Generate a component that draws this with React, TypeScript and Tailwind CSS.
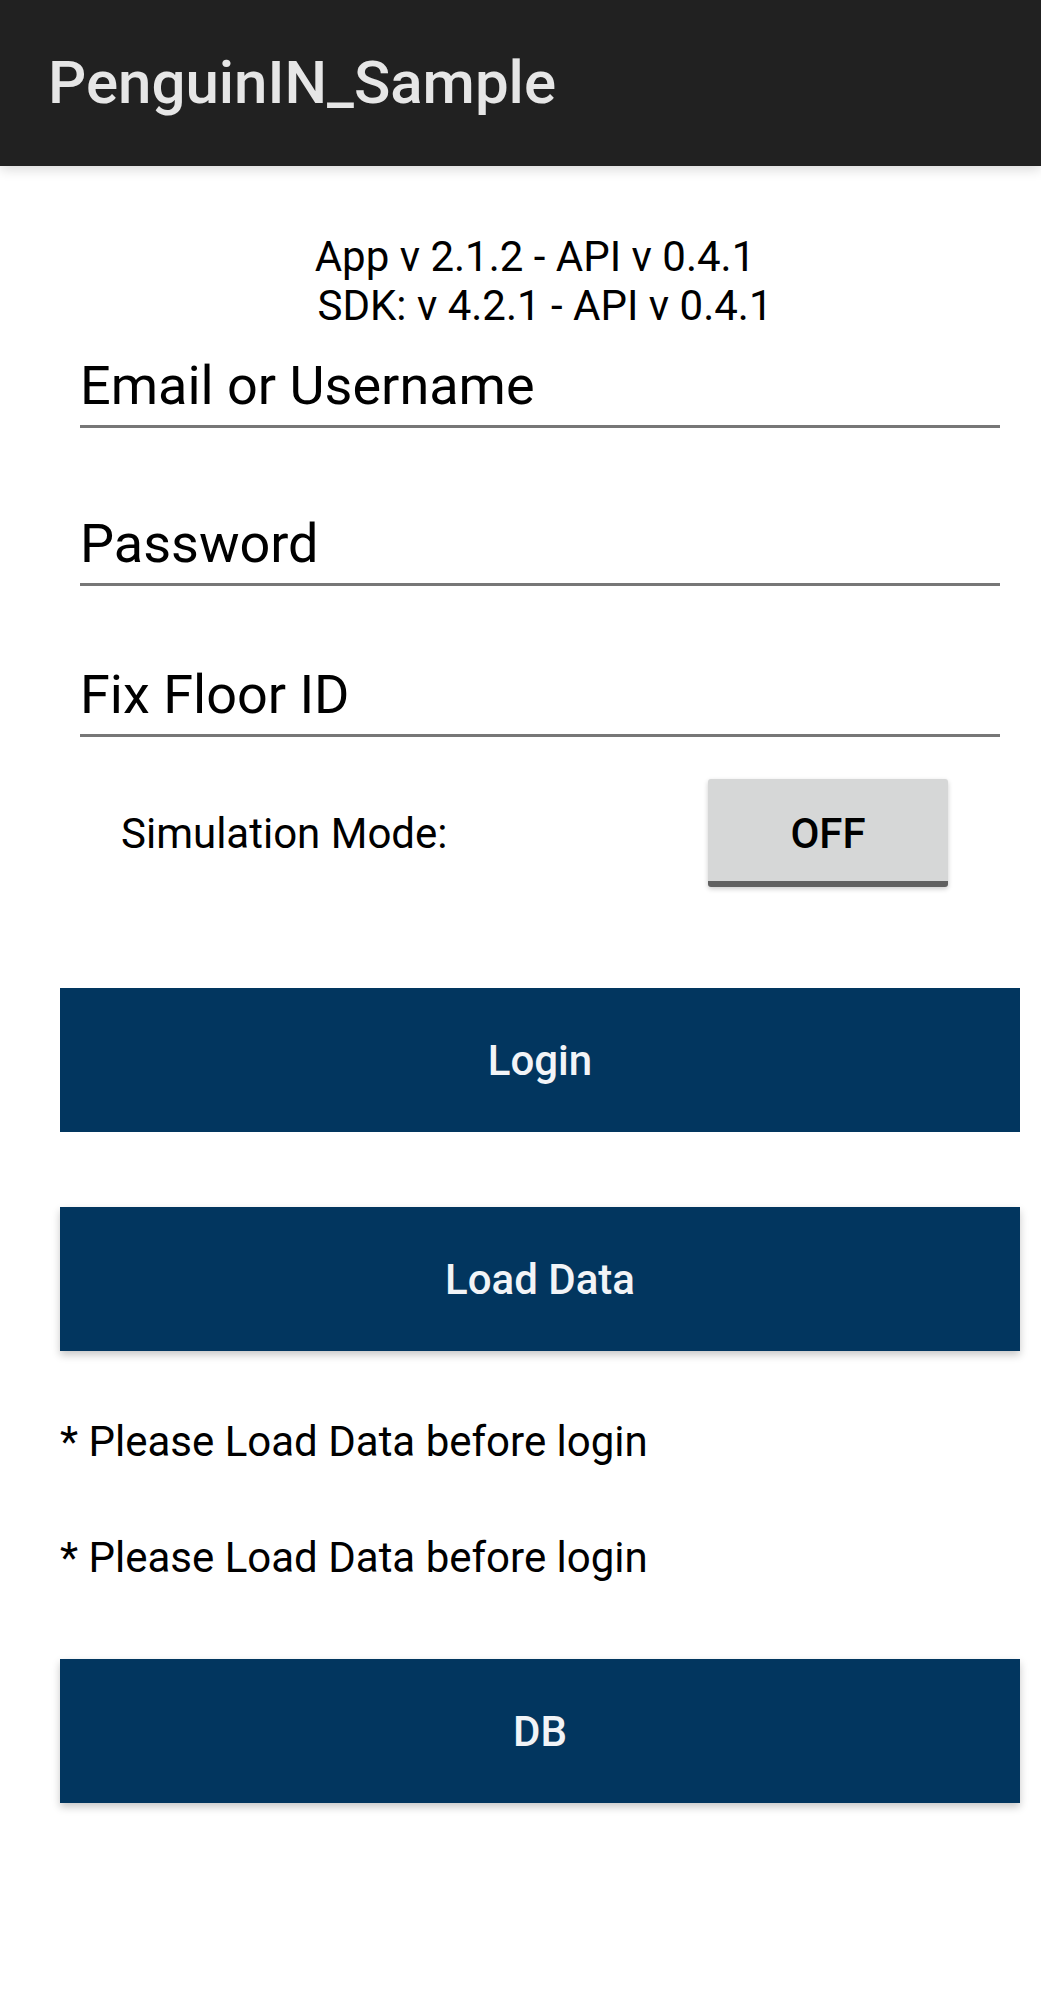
export default function App() {
  return (
    <div className="min-h-screen bg-white font-['Roboto',sans-serif] text-black">
      {/* ── Toolbar ── */}
      <header className="relative z-10 flex h-[166px] items-center bg-[#212121] pl-[48px] shadow-[0_3px_12px_rgba(0,0,0,0.16)]">
        <h1 className="text-[60px] font-medium leading-none text-[#e6e6e6]">PenguinIN_Sample</h1>
      </header>

      <main className="ml-[60px] flex w-[960px] flex-col pb-[60px]">
        {/* ── Versions ── */}
        <div className="mt-[66px] text-center text-[42px] leading-[49px]">
          <p className="pr-[10px]">App v 2.1.2 - API v 0.4.1</p>
          <p className="pl-[10px]">SDK: v 4.2.1 - API v 0.4.1</p>
        </div>

        {/* ── Fields ── */}
        <Field label="Email or Username" className="mt-[24px]" />
        <Field label="Password" type="password" className="mt-[84px]" />
        <Field label="Fix Floor ID" className="mt-[77px]" />

        {/* ── Simulation toggle ── */}
        <div className="mt-[42px] flex items-center justify-between pl-[61px] pr-[72px]">
          <span className="text-[42px] leading-[49px]">Simulation Mode:</span>
          <button className="h-[108px] w-[240px] rounded-[3px] border-b-[6px] border-[#616161] bg-[#d6d7d7] pt-[6px] text-[42px] font-medium leading-[49px] text-black shadow-[0_2px_5px_rgba(0,0,0,0.2)]">
            OFF
          </button>
        </div>

        {/* ── Actions ── */}
        <PrimaryButton label="Login" className="mt-[101px]" />
        <PrimaryButton label="Load Data" className="mt-[75px] shadow-[0_4px_8px_rgba(0,0,0,0.22)]" />

        <p className="mt-[66px] text-[42px] leading-[49px]">* Please Load Data before login</p>
        <p className="mt-[67px] text-[42px] leading-[49px]">* Please Load Data before login</p>

        <PrimaryButton label="DB" className="mt-[77px] h-[143px] shadow-[0_4px_8px_rgba(0,0,0,0.22)]" />
      </main>
    </div>
  );
}

function Field({ label, type = "text", className = "" }: { label: string; type?: string; className?: string }) {
  return (
    <div className={`mx-[20px] border-b-[3px] border-[#777777] pb-[8px] ${className}`}>
      <input
        type={type}
        placeholder={label}
        className="block h-[63px] w-full bg-transparent text-[54px] leading-[63px] text-black placeholder-black outline-none"
      />
    </div>
  );
}

function PrimaryButton({ label, className = "" }: { label: string; className?: string }) {
  return (
    <button
      className={`flex h-[144px] w-full items-center justify-center bg-[#02365f] text-[42px] font-medium leading-[49px] text-[#f2f4f7] ${className}`}
    >
      {label}
    </button>
  );
}
